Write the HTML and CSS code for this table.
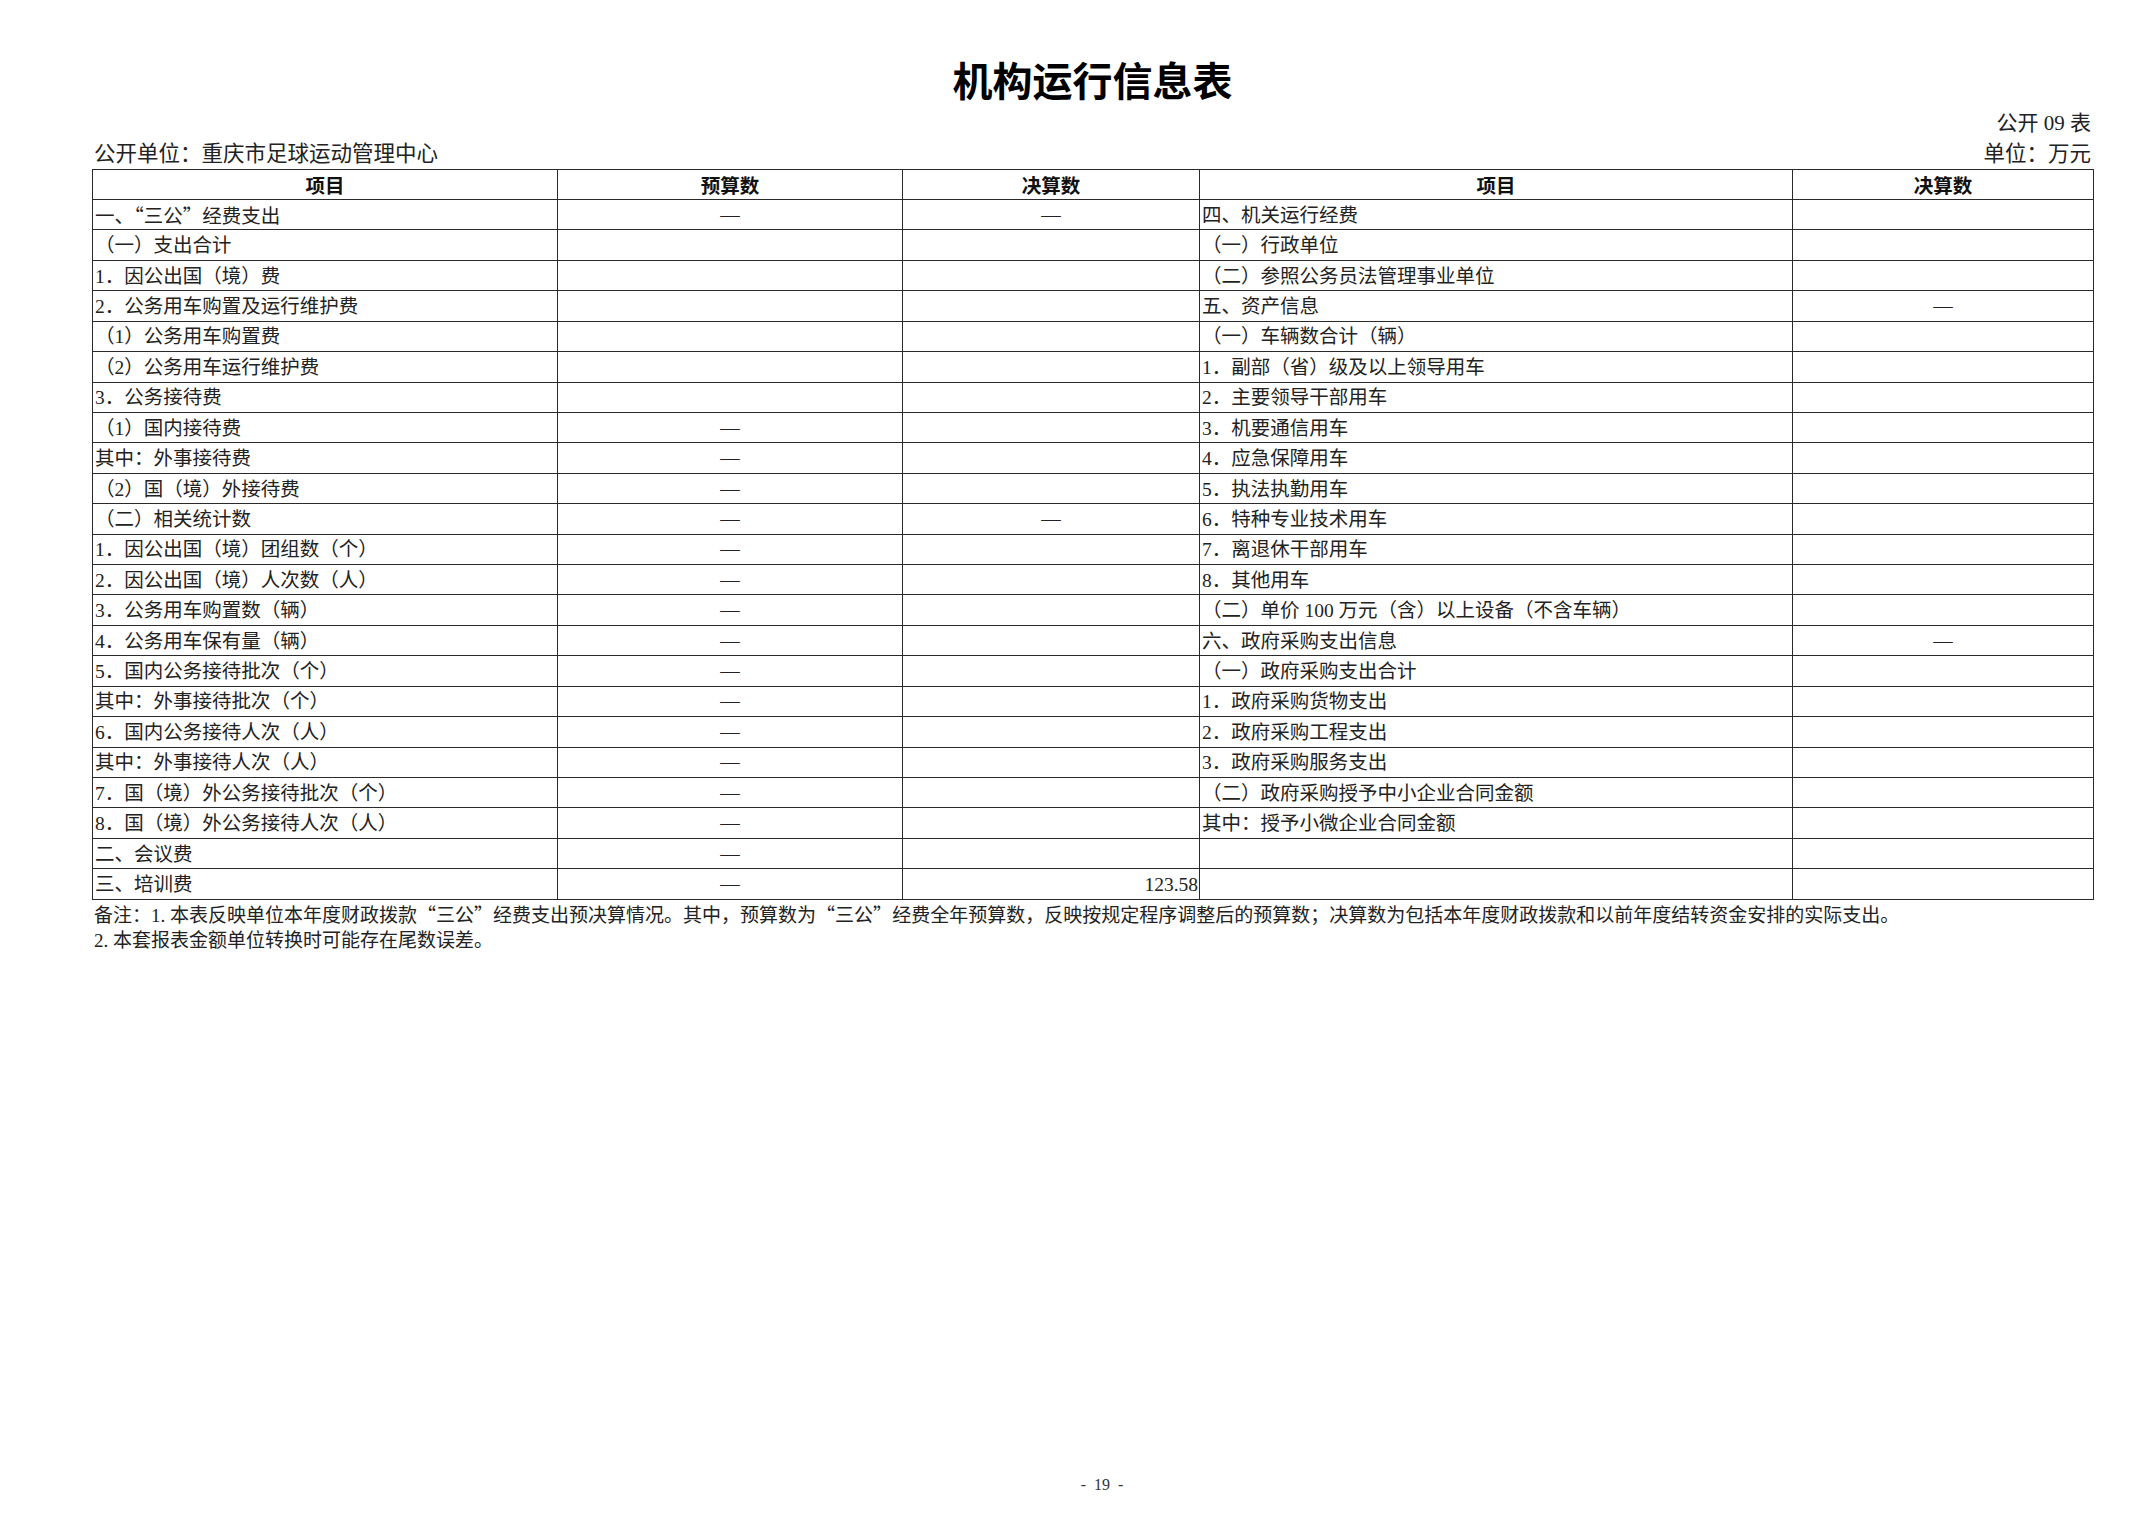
FILE: index.html
```html
<!DOCTYPE html>
<html lang="zh-CN">
<head>
<meta charset="utf-8">
<title>机构运行信息表</title>
<link rel="stylesheet" href="styles.css">
</head>
<body>
<div class="page">
  <h1 class="title">机构运行信息表</h1>
  <div class="code">公开 09 表</div>
  <div class="meta"><span>公开单位：重庆市足球运动管理中心</span><span>单位：万元</span></div>
  <table class="report">
    <colgroup>
      <col class="c-item1">
      <col class="c-budget">
      <col class="c-final1">
      <col class="c-item2">
      <col class="c-final2">
    </colgroup>
    <thead>
      <tr><th>项目</th><th>预算数</th><th>决算数</th><th>项目</th><th>决算数</th></tr>
    </thead>
    <tbody>
      <tr><td class="item">一、<span class="cjk">“</span>三公<span class="cjk">”</span>经费支出</td><td class="num">—</td><td class="num">—</td><td class="item">四、机关运行经费</td><td class="num"></td></tr>
      <tr><td class="item">（一）支出合计</td><td class="num"></td><td class="num"></td><td class="item">（一）行政单位</td><td class="num"></td></tr>
      <tr><td class="item">1．因公出国（境）费</td><td class="num"></td><td class="num"></td><td class="item">（二）参照公务员法管理事业单位</td><td class="num"></td></tr>
      <tr><td class="item">2．公务用车购置及运行维护费</td><td class="num"></td><td class="num"></td><td class="item">五、资产信息</td><td class="num">—</td></tr>
      <tr><td class="item">（1）公务用车购置费</td><td class="num"></td><td class="num"></td><td class="item">（一）车辆数合计（辆）</td><td class="num"></td></tr>
      <tr><td class="item">（2）公务用车运行维护费</td><td class="num"></td><td class="num"></td><td class="item">1．副部（省）级及以上领导用车</td><td class="num"></td></tr>
      <tr><td class="item">3．公务接待费</td><td class="num"></td><td class="num"></td><td class="item">2．主要领导干部用车</td><td class="num"></td></tr>
      <tr><td class="item">（1）国内接待费</td><td class="num">—</td><td class="num"></td><td class="item">3．机要通信用车</td><td class="num"></td></tr>
      <tr><td class="item">其中：外事接待费</td><td class="num">—</td><td class="num"></td><td class="item">4．应急保障用车</td><td class="num"></td></tr>
      <tr><td class="item">（2）国（境）外接待费</td><td class="num">—</td><td class="num"></td><td class="item">5．执法执勤用车</td><td class="num"></td></tr>
      <tr><td class="item">（二）相关统计数</td><td class="num">—</td><td class="num">—</td><td class="item">6．特种专业技术用车</td><td class="num"></td></tr>
      <tr><td class="item">1．因公出国（境）团组数（个）</td><td class="num">—</td><td class="num"></td><td class="item">7．离退休干部用车</td><td class="num"></td></tr>
      <tr><td class="item">2．因公出国（境）人次数（人）</td><td class="num">—</td><td class="num"></td><td class="item">8．其他用车</td><td class="num"></td></tr>
      <tr><td class="item">3．公务用车购置数（辆）</td><td class="num">—</td><td class="num"></td><td class="item">（二）单价 100 万元（含）以上设备（不含车辆）</td><td class="num"></td></tr>
      <tr><td class="item">4．公务用车保有量（辆）</td><td class="num">—</td><td class="num"></td><td class="item">六、政府采购支出信息</td><td class="num">—</td></tr>
      <tr><td class="item">5．国内公务接待批次（个）</td><td class="num">—</td><td class="num"></td><td class="item">（一）政府采购支出合计</td><td class="num"></td></tr>
      <tr><td class="item">其中：外事接待批次（个）</td><td class="num">—</td><td class="num"></td><td class="item">1．政府采购货物支出</td><td class="num"></td></tr>
      <tr><td class="item">6．国内公务接待人次（人）</td><td class="num">—</td><td class="num"></td><td class="item">2．政府采购工程支出</td><td class="num"></td></tr>
      <tr><td class="item">其中：外事接待人次（人）</td><td class="num">—</td><td class="num"></td><td class="item">3．政府采购服务支出</td><td class="num"></td></tr>
      <tr><td class="item">7．国（境）外公务接待批次（个）</td><td class="num">—</td><td class="num"></td><td class="item">（二）政府采购授予中小企业合同金额</td><td class="num"></td></tr>
      <tr><td class="item">8．国（境）外公务接待人次（人）</td><td class="num">—</td><td class="num"></td><td class="item">其中：授予小微企业合同金额</td><td class="num"></td></tr>
      <tr><td class="item">二、会议费</td><td class="num">—</td><td class="num"></td><td class="item"></td><td class="num"></td></tr>
      <tr><td class="item">三、培训费</td><td class="num">—</td><td class="amt">123.58</td><td class="item"></td><td class="num"></td></tr>
    </tbody>
  </table>
  <div class="notes">
    <p>备注：1. 本表反映单位本年度财政拨款<span class="cjk">“</span>三公<span class="cjk">”</span>经费支出预决算情况。其中，预算数为<span class="cjk">“</span>三公<span class="cjk">”</span>经费全年预算数，反映按规定程序调整后的预算数；决算数为包括本年度财政拨款和以前年度结转资金安排的实际支出。</p>
    <p>2. 本套报表金额单位转换时可能存在尾数误差。</p>
  </div>
  <div class="footer">- 19 -</div>
</div>
</body>
</html>
```

FILE: styles.css
```css
html, body {
  margin: 0;
  padding: 0;
  background: #ffffff;
}

body {
  color: #222222;
  font-family: "Liberation Serif", "Noto Sans CJK SC", serif;
}

.cjk {
  font-family: "Noto Sans CJK SC", sans-serif;
}

.page {
  width: 2149px;
  min-height: 1520px;
  box-sizing: border-box;
  padding: 0 56px 25px 92px;
  display: flex;
  flex-direction: column;
}

.title {
  margin: 55px 0 0;
  font-family: "Noto Sans CJK SC", sans-serif;
  font-weight: 700;
  font-size: 40px;
  line-height: 48px;
  text-align: center;
  color: #000000;
}

.code {
  margin-top: 5px;
  font-size: 21px;
  line-height: 31px;
  text-align: right;
  padding-right: 2px;
}

.meta {
  display: flex;
  justify-content: space-between;
  font-size: 21.5px;
  line-height: 30px;
  padding: 0 2px 0 2px;
}

.report {
  width: 2001px;
  table-layout: fixed;
  border-collapse: collapse;
  font-size: 19.5px;
}

.c-item1 { width: 465px; }
.c-budget { width: 345px; }
.c-final1 { width: 297px; }
.c-item2 { width: 593px; }
.c-final2 { width: 301px; }

.report th,
.report td {
  border: 1px solid #2a2a2a;
  padding: 0 2px;
  line-height: 24px;
  white-space: nowrap;
  overflow: hidden;
  vertical-align: middle;
}

.report thead tr {
  height: 30px;
}

.report tbody tr {
  height: 30.43px;
}

.report th {
  font-family: "Noto Sans CJK SC", sans-serif;
  font-weight: 700;
  color: #111111;
  text-align: center;
}

.report td.item {
  text-align: left;
  padding-top: 2px;
}

.report td.num {
  text-align: center;
}

.report td.amt {
  text-align: right;
  padding-right: 1px;
  padding-top: 2px;
}

.notes {
  font-size: 19px;
  line-height: 25px;
  padding-left: 2px;
  margin-top: 1px;
}

.notes p {
  margin: 0;
  white-space: nowrap;
}

.footer {
  margin-top: auto;
  font-size: 16px;
  line-height: 20px;
  text-align: center;
  padding-left: 19px;
  word-spacing: 4px;
  color: #333333;
}
```
